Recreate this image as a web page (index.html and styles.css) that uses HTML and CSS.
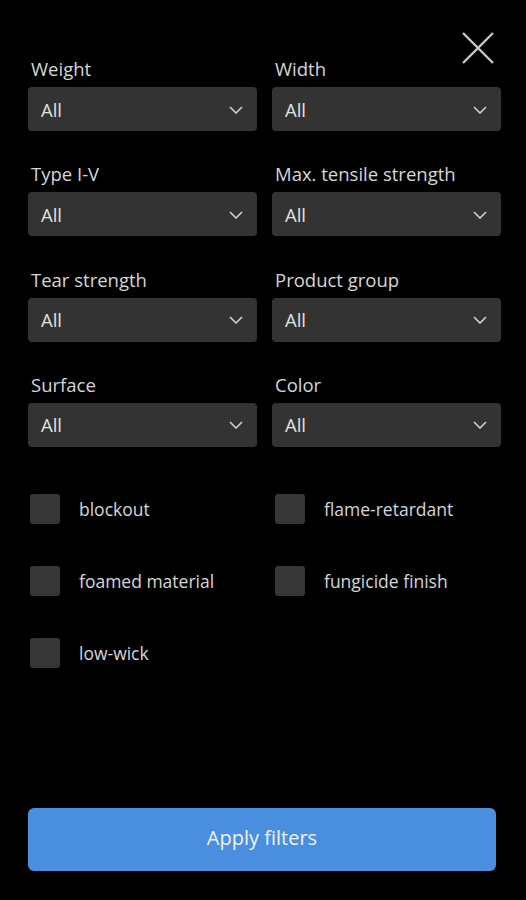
FILE: index.html
```html
<!DOCTYPE html>
<html lang="en">
<head>
<meta charset="utf-8">
<title>Filters</title>
<link rel="stylesheet" href="styles.css">
</head>
<body>
<div class="panel">
  <div class="top">
    <button class="close" aria-label="Close">
      <svg width="34" height="34" viewBox="0 0 34 34"><path d="M2 2 L32 32 M32 2 L2 32" stroke="#c8c8c8" stroke-width="2.4" fill="none"/></svg>
    </button>
  </div>
  <div class="grid">
    <div class="field"><div class="label">Weight</div><div class="select"><span>All</span><svg class="chev" width="14" height="8" viewBox="0 0 14 8"><path d="M1 1 L7 7 L13 1" stroke="#d0d0d0" stroke-width="1.6" fill="none"/></svg></div></div>
    <div class="field"><div class="label">Width</div><div class="select"><span>All</span><svg class="chev" width="14" height="8" viewBox="0 0 14 8"><path d="M1 1 L7 7 L13 1" stroke="#d0d0d0" stroke-width="1.6" fill="none"/></svg></div></div>
    <div class="field"><div class="label">Type I-V</div><div class="select"><span>All</span><svg class="chev" width="14" height="8" viewBox="0 0 14 8"><path d="M1 1 L7 7 L13 1" stroke="#d0d0d0" stroke-width="1.6" fill="none"/></svg></div></div>
    <div class="field"><div class="label">Max. tensile strength</div><div class="select"><span>All</span><svg class="chev" width="14" height="8" viewBox="0 0 14 8"><path d="M1 1 L7 7 L13 1" stroke="#d0d0d0" stroke-width="1.6" fill="none"/></svg></div></div>
    <div class="field"><div class="label">Tear strength</div><div class="select"><span>All</span><svg class="chev" width="14" height="8" viewBox="0 0 14 8"><path d="M1 1 L7 7 L13 1" stroke="#d0d0d0" stroke-width="1.6" fill="none"/></svg></div></div>
    <div class="field"><div class="label">Product group</div><div class="select"><span>All</span><svg class="chev" width="14" height="8" viewBox="0 0 14 8"><path d="M1 1 L7 7 L13 1" stroke="#d0d0d0" stroke-width="1.6" fill="none"/></svg></div></div>
    <div class="field"><div class="label">Surface</div><div class="select"><span>All</span><svg class="chev" width="14" height="8" viewBox="0 0 14 8"><path d="M1 1 L7 7 L13 1" stroke="#d0d0d0" stroke-width="1.6" fill="none"/></svg></div></div>
    <div class="field"><div class="label">Color</div><div class="select"><span>All</span><svg class="chev" width="14" height="8" viewBox="0 0 14 8"><path d="M1 1 L7 7 L13 1" stroke="#d0d0d0" stroke-width="1.6" fill="none"/></svg></div></div>
  </div>
  <div class="checks">
    <label class="check"><span class="box"></span><span>blockout</span></label>
    <label class="check"><span class="box"></span><span>flame-retardant</span></label>
    <label class="check"><span class="box"></span><span>foamed material</span></label>
    <label class="check"><span class="box"></span><span>fungicide finish</span></label>
    <label class="check"><span class="box"></span><span>low-wick</span></label>
  </div>
  <div class="spacer"></div>
  <button class="apply">Apply filters</button>
</div>
</body>
</html>
```
FILE: styles.css
```css
* { box-sizing: border-box; }
html, body { margin: 0; padding: 0; background: #000; }
body { font-family: "Open Sans", "Noto Sans", sans-serif; color: #d8d8d8; }
.panel {
  width: 526px;
  height: 900px;
  padding: 29px 25px 29px 28px;
  display: flex;
  flex-direction: column;
}
.top { display: flex; justify-content: flex-end; height: 28px; }
.close {
  background: none; border: 0; padding: 0; margin: 2px 6px 0 0;
  width: 34px; height: 34px; cursor: pointer;
}
.grid {
  display: grid;
  grid-template-columns: 229px 229px;
  column-gap: 15px;
  row-gap: 31.3px;
}
.field { display: flex; flex-direction: column; gap: 6px; }
.label { font-size: 18.5px; line-height: 24px; padding-left: 3px; color: #d6d6d6; }
.select {
  height: 44px;
  background: #333333;
  border-radius: 4px;
  display: flex;
  align-items: center;
  justify-content: space-between;
  padding: 0 14px 0 13px;
  font-size: 18.5px;
  color: #e0e0e0;
}
.chev { margin-top: 1px; }
.checks {
  margin-top: 47px;
  display: grid;
  grid-template-columns: 229px 229px;
  column-gap: 16px;
  row-gap: 42px;
}
.check { display: flex; align-items: center; gap: 19px; padding-left: 2px; font-size: 17.5px; color: #d6d6d6; }
.box { width: 30px; height: 30px; background: #363636; border-radius: 3px; flex: none; }
.spacer { flex: 1; }
.apply {
  width: 468px;
  height: 63px;
  background: #4a8ee0;
  border: 0;
  border-radius: 6px;
  color: #eef4fc;
  font-family: "Open Sans", "Noto Sans", sans-serif;
  font-size: 20px;
  padding: 0 0 5px 0;
}
```
